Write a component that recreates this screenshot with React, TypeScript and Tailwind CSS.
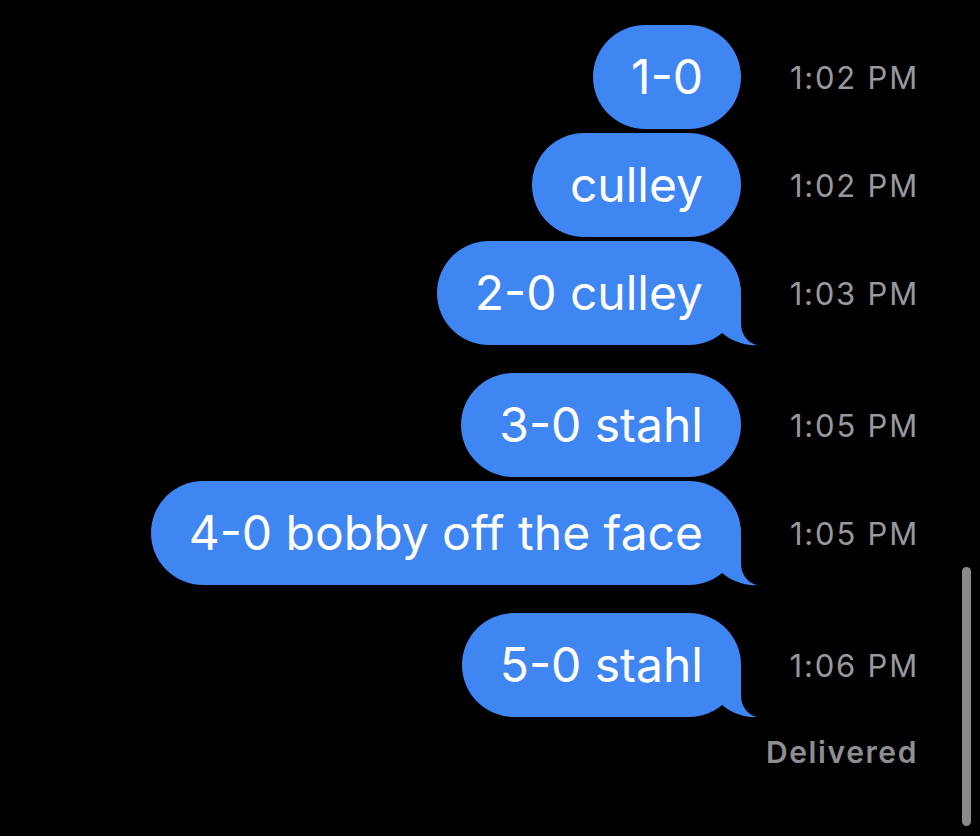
import React from "react";

const FONT = { fontFamily: "Inter, 'Noto Sans', 'Liberation Sans', sans-serif" };

function Tail() {
  return (
    <svg
      className="absolute right-[-18px] bottom-[-1px] w-[40px] h-[56px]"
      viewBox="-22 -55 40 56"
    >
      <path
        d="M0 -52 L0 -22 C0 -10 7 -2 16 0 C7 1 -9 -3 -19 -12 Z"
        fill="#3f86f3"
      />
    </svg>
  );
}

type Msg = { text: string; time: string; tail?: boolean };

const msgs: Msg[] = [
  { text: "1-0", time: "1:02 PM" },
  { text: "culley", time: "1:02 PM" },
  { text: "2-0 culley", time: "1:03 PM", tail: true },
  { text: "3-0 stahl", time: "1:05 PM" },
  { text: "4-0 bobby off the face", time: "1:05 PM", tail: true },
  { text: "5-0 stahl", time: "1:06 PM", tail: true },
];

export default function App() {
  return (
    <div className="relative w-[980px] h-[836px] bg-black overflow-hidden" style={FONT}>
      <div className="flex flex-col pt-[25px]">
        {msgs.map((m, i) => (
          <div key={i} className={`flex items-center ${m.tail ? "mb-[28px]" : "mb-[4px]"}`}>
            <div className="flex-1 flex justify-end">
              <div className="relative h-[104px] rounded-[52px] bg-[#3f86f3] px-[38px] flex items-center">
                <span className="text-white text-[48px] leading-none relative">{m.text}</span>
                {m.tail && <Tail />}
              </div>
            </div>
            <div className="w-[178px] mr-[61px] text-right text-[#98989e] text-[31px] tracking-[1.8px] leading-none">
              {m.time}
            </div>
          </div>
        ))}
        <div className="flex justify-end pr-[62px] mt-[-8px]">
          <span className="text-[#8e8e93] text-[30px] font-semibold tracking-[1.6px] leading-none">Delivered</span>
        </div>
      </div>
      <div className="absolute left-[962px] top-[567px] w-[9px] h-[259px] rounded-full bg-[#8a8a8a]" />
    </div>
  );
}
